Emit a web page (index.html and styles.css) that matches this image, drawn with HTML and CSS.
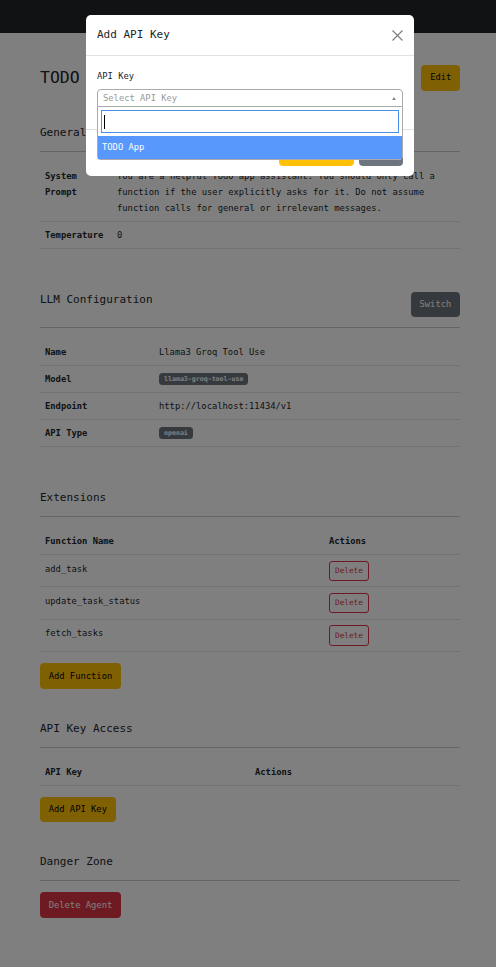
FILE: index.html
```html
<!DOCTYPE html>
<html lang="en">
<head>
<meta charset="utf-8">
<title>TODO Agent</title>
<link rel="stylesheet" href="styles.css">
</head>
<body>
<nav class="navbar"></nav>
<main class="container">
  <div class="page-head">
    <h2 class="page-title">TODO</h2>
    <button class="btn btn-warning">Edit</button>
  </div>

  <section class="section section-first">
    <div class="section-head"><h5 class="section-title">General Settings</h5></div>
    <hr class="rule">
    <table class="tbl">
      <colgroup><col class="c-general"><col></colgroup>
      <tr><th>System Prompt</th><td>You are a helpful Todo app assistant. You should only call a function if the user explicitly asks for it. Do not assume function calls for general or irrelevant messages.</td></tr>
      <tr><th>Temperature</th><td>0</td></tr>
    </table>
  </section>

  <section class="section">
    <div class="section-head">
      <h5 class="section-title">LLM Configuration</h5>
      <button class="btn btn-secondary">Switch</button>
    </div>
    <hr class="rule">
    <table class="tbl">
      <colgroup><col class="c-llm"><col></colgroup>
      <tr><th>Name</th><td>Llama3 Groq Tool Use</td></tr>
      <tr><th>Model</th><td><span class="badge">llama3-groq-tool-use</span></td></tr>
      <tr><th>Endpoint</th><td>http://localhost:11434/v1</td></tr>
      <tr><th>API Type</th><td><span class="badge">openai</span></td></tr>
    </table>
  </section>

  <section class="section">
    <div class="section-head"><h5 class="section-title">Extensions</h5></div>
    <hr class="rule">
    <table class="tbl tbl-actions">
      <colgroup><col class="c-fn"><col></colgroup>
      <tr><th>Function Name</th><th>Actions</th></tr>
      <tr><td>add_task</td><td><button class="btn-sm btn-outline-danger">Delete</button></td></tr>
      <tr><td>update_task_status</td><td><button class="btn-sm btn-outline-danger">Delete</button></td></tr>
      <tr><td>fetch_tasks</td><td><button class="btn-sm btn-outline-danger">Delete</button></td></tr>
    </table>
    <button class="btn btn-warning">Add Function</button>
  </section>

  <section class="section">
    <div class="section-head"><h5 class="section-title">API Key Access</h5></div>
    <hr class="rule">
    <table class="tbl">
      <colgroup><col class="c-half"><col></colgroup>
      <tr><th>API Key</th><th>Actions</th></tr>
    </table>
    <button class="btn btn-warning">Add API Key</button>
  </section>

  <section class="section">
    <div class="section-head"><h5 class="section-title">Danger Zone</h5></div>
    <hr class="rule rule-danger">
    <button class="btn btn-danger">Delete Agent</button>
  </section>
</main>

<div class="backdrop"></div>

<div class="modal">
  <div class="modal-header">
    <h5 class="modal-title">Add API Key</h5>
    <button class="btn-close" aria-label="Close">
      <svg width="11" height="11" viewBox="0 0 11 11"><path d="M0.5 0.5 L10.5 10.5 M10.5 0.5 L0.5 10.5" stroke="#000" stroke-width="1.2" fill="none"/></svg>
    </button>
  </div>
  <div class="modal-body">
    <label class="form-label">API Key</label>
    <div class="select2">
      <div class="select2-selection">
        <span class="placeholder">Select API Key</span>
        <span class="arrow"></span>
      </div>
      <div class="select2-dropdown">
        <div class="search-wrap">
          <div class="search-field"><span class="caret"></span></div>
        </div>
        <div class="option highlighted">TODO App</div>
      </div>
    </div>
  </div>
  <div class="modal-footer">
    <button class="btn btn-warning">Add API Key</button>
    <button class="btn btn-secondary">Close</button>
  </div>
</div>
</body>
</html>
```

FILE: styles.css
```css
* { box-sizing: border-box; }

html, body {
  margin: 0;
  padding: 0;
}

body {
  background: #fff;
  color: #212529;
  font-family: "DejaVu Sans Mono", monospace;
  font-size: 8.8px;
  line-height: 16px;
  overflow: hidden;
}

.navbar {
  height: 33px;
  background: #212529;
}

.container {
  padding: 0 36px 40px 40px;
}

.page-head {
  margin-top: 32px;
  display: flex;
  justify-content: space-between;
  align-items: center;
}

.page-title {
  margin: 0;
  font-size: 16.5px;
  font-weight: normal;
  line-height: 20px;
}

.section { padding-top: 32px; display: flow-root; }
.section-first { padding-top: 34px; }

.section-head {
  display: flex;
  justify-content: space-between;
  align-items: flex-start;
  margin-bottom: 10px;
}

.section-title {
  margin: 0;
  font-size: 11px;
  font-weight: normal;
  line-height: 16px;
}

.rule {
  margin: 0;
  border: 0;
  border-top: 1px solid #c8c9ca;
  height: 0;
}

.tbl {
  width: 100%;
  border-collapse: collapse;
  table-layout: fixed;
  margin: 11px 0 11px;
}

.c-general { width: 72px; }
.c-llm { width: 114px; }
.c-fn { width: 284px; }
.c-half { width: 50%; }

.tbl th,
.tbl td {
  padding: 5px 5px;
  text-align: left;
  vertical-align: top;
  border-bottom: 1px solid #dee2e6;
  line-height: 16px;
}

.tbl th { font-weight: bold; }

.tbl-actions td { padding: 5.5px 5px; }

.badge {
  display: inline-block;
  vertical-align: middle;
  background: #6c757d;
  color: #fff;
  font-size: 6.6px;
  font-weight: bold;
  height: 12px;
  line-height: 12px;
  padding: 0 5px;
  border-radius: 3.5px;
  position: relative;
  top: -1px;
}

.btn {
  font-family: inherit;
  font-size: 8.8px;
  height: 25.5px;
  padding: 0 7.7px;
  border: 1px solid transparent;
  border-radius: 3.5px;
  display: inline-flex;
  align-items: center;
  line-height: 1;
  cursor: pointer;
}

.btn-warning { background: #ffc107; border-color: #ffc107; color: #000; }
.btn-secondary { background: #6c757d; border-color: #6c757d; color: #fff; }
.btn-danger { background: #dc3545; border-color: #dc3545; color: #fff; }

.rule-danger { margin-bottom: 11px; }

.btn-sm {
  font-family: inherit;
  font-size: 7.7px;
  height: 20.4px;
  padding: 0 5px;
  border-radius: 3px;
  display: inline-flex;
  align-items: center;
  line-height: 1;
  background: transparent;
}

.btn-outline-danger { border: 1px solid #dc3545; color: #dc3545; }

.backdrop {
  position: fixed;
  inset: 0;
  background: rgba(0, 0, 0, 0.5);
}

.modal {
  position: fixed;
  top: 15px;
  left: 86px;
  width: 328px;
  background: #fff;
  border-radius: 5px;
}

.modal-header {
  height: 41px;
  padding: 0 11px;
  display: flex;
  align-items: center;
  justify-content: space-between;
  border-bottom: 1px solid #dee2e6;
}

.modal-title {
  margin: 0;
  font-size: 11px;
  font-weight: normal;
  line-height: 16px;
}

.btn-close {
  width: 11px;
  height: 11px;
  padding: 0;
  border: 0;
  background: transparent;
  opacity: 0.5;
  display: flex;
}

.modal-body {
  padding: 12px 11px 22px;
}

.form-label {
  display: block;
  line-height: 16px;
  margin-bottom: 5px;
}

.select2 { position: relative; }

.select2-selection {
  height: 18px;
  border: 1px solid #aaa;
  border-radius: 4px 4px 0 0;
  padding-left: 5px;
  display: flex;
  align-items: center;
  position: relative;
}

.placeholder { color: #999; }

.arrow {
  position: absolute;
  right: 6px;
  top: 7px;
  width: 0;
  height: 0;
  border-style: solid;
  border-width: 0 2.5px 3px 2.5px;
  border-color: transparent transparent #888 transparent;
}

.select2-dropdown {
  position: absolute;
  top: 100%;
  left: 0;
  right: 0;
  background: #fff;
  border: 1px solid #aaa;
  border-top: 0;
  border-radius: 0 0 4px 4px;
  z-index: 2;
}

.search-wrap { padding: 3px; }

.search-field {
  height: 23px;
  border: 1px solid #4a8fe8;
  display: flex;
  align-items: center;
  padding-left: 2px;
}

.caret {
  width: 1px;
  height: 14px;
  background: #000;
}

.option {
  height: 23px;
  line-height: 23px;
  padding-left: 4px;
}

.option.highlighted {
  background: #5897fb;
  color: #fff;
}

.modal-footer {
  border-top: 1px solid #dee2e6;
  padding: 10.5px 11px 10px;
  display: flex;
  justify-content: flex-end;
  gap: 5px;
}
```
